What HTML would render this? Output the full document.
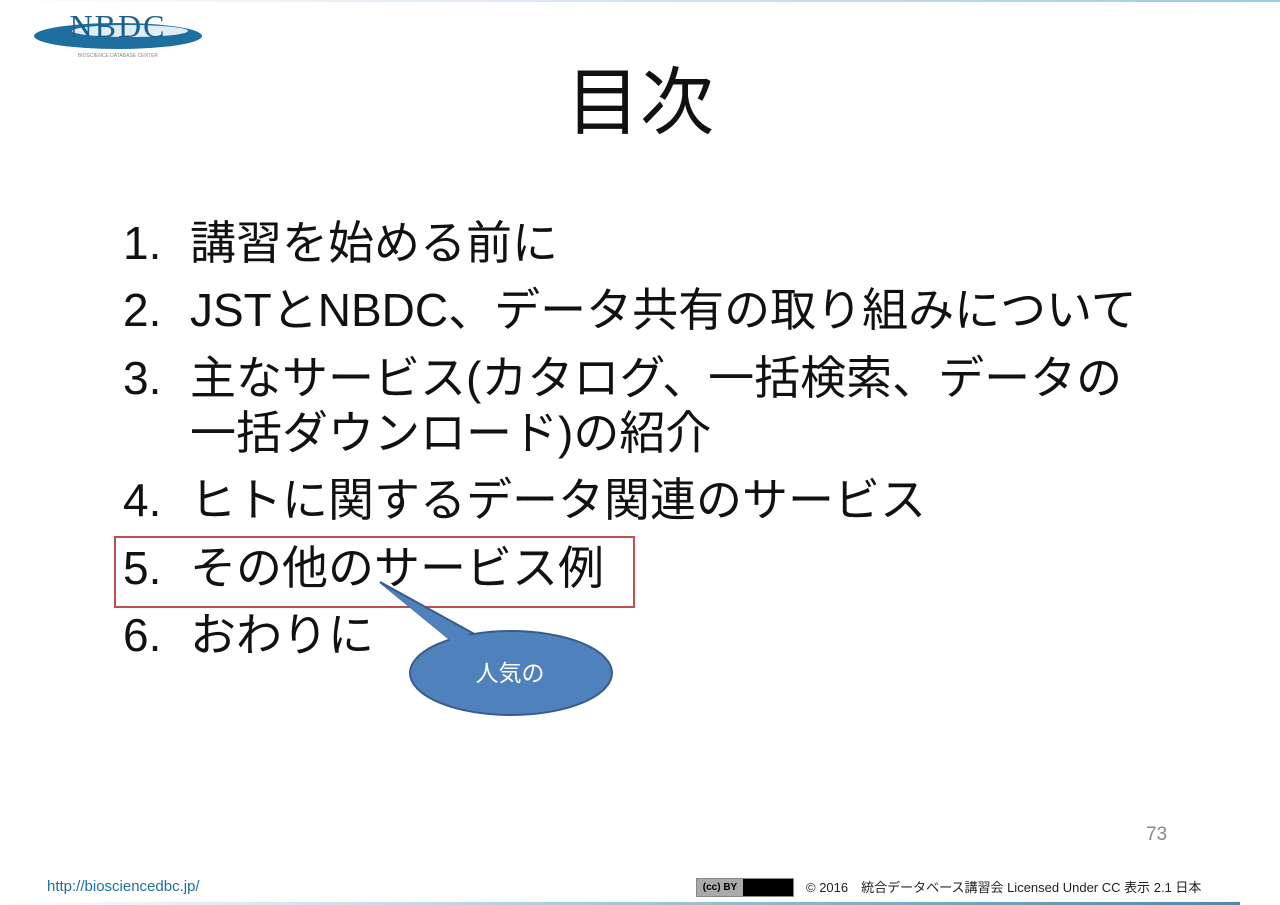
<!DOCTYPE html>
<html><head><meta charset="utf-8"><style>
body{margin:0;width:1280px;height:905px;background:#fff;position:relative;overflow:hidden;font-family:"Liberation Sans","Noto Sans CJK JP",sans-serif;color:#111}
.t{position:absolute;white-space:nowrap}
.li{position:absolute;font-size:46px;line-height:50px;white-space:nowrap}
.n{position:absolute;left:123px}
.x{position:absolute;left:190px}
</style></head><body>
<div style="position:absolute;left:0;top:0;width:1280px;height:2px;background:linear-gradient(90deg,#fff,#cde 60%,#9cd)"></div>
<svg class="t" style="left:30px;top:2px" width="180" height="58">
<ellipse cx="88" cy="34" rx="84" ry="13" fill="#1f6ea0"/>
<ellipse cx="100" cy="29" rx="58" ry="6" fill="#dfeef6"/>
<text x="88" y="35" text-anchor="middle" font-family="Liberation Serif" font-size="32" fill="#1b5f8e" letter-spacing="2">NBDC</text>
<text x="88" y="55" text-anchor="middle" font-size="5" fill="#888">BIOSCIENCE DATABASE CENTER</text>
</svg>
<div class="t" style="left:0;width:1280px;text-align:center;top:58px;font-size:74px;line-height:90px">目次</div>
<div class="li" style="top:218px"><span class="n">1.</span><span class="x">講習を始める前に</span></div>
<div class="li" style="top:285px"><span class="n">2.</span><span class="x">JSTとNBDC、データ共有の取り組みについて</span></div>
<div class="li" style="top:353px"><span class="n">3.</span><span class="x">主なサービス(カタログ、一括検索、データの</span></div>
<div class="li" style="top:408px"><span class="x">一括ダウンロード)の紹介</span></div>
<div class="li" style="top:475px"><span class="n">4.</span><span class="x">ヒトに関するデータ関連のサービス</span></div>
<div class="li" style="top:543px"><span class="n">5.</span><span class="x">その他のサービス例</span></div>
<div class="li" style="top:610px"><span class="n">6.</span><span class="x">おわりに</span></div>
<div style="position:absolute;left:114px;top:536px;width:517px;height:68px;border:2px solid #c0504d"></div>
<svg class="t" style="left:0;top:0" width="1280" height="905">
<path d="M380 582 L452 641 L478 636 Z" fill="#4f81bd" stroke="#385d8a" stroke-width="2"/>
<ellipse cx="511" cy="673" rx="101" ry="42" fill="#4f81bd" stroke="#385d8a" stroke-width="2"/>
<path d="M383 585 L453 643 L476 639 Z" fill="#4f81bd"/>
<text x="510" y="681" text-anchor="middle" font-family="Liberation Sans,Noto Sans CJK JP,sans-serif" font-size="23" fill="#fff">人気の</text>
</svg>
<div class="t" style="left:1146px;top:824px;font-size:19px;color:#888">73</div>
<div class="t" style="left:47px;top:878px;font-size:15px;color:#1f6ea0">http://biosciencedbc.jp/</div>
<div class="t" style="left:696px;top:878px;width:96px;height:17px;background:#000;border:1px solid #888"><div style="width:46px;height:17px;background:#aaa;color:#000;font-size:10px;font-weight:bold;line-height:17px;text-align:center">(cc) BY</div></div>
<div class="t" style="left:806px;top:877px;font-size:13px;color:#222">© 2016　統合データベース講習会 Licensed Under CC 表示 2.1 日本</div>
<div style="position:absolute;left:0;top:902px;width:1240px;height:3px;background:linear-gradient(90deg,#fff,#9cd 50%,#3a8fc0)"></div>
</body></html>
